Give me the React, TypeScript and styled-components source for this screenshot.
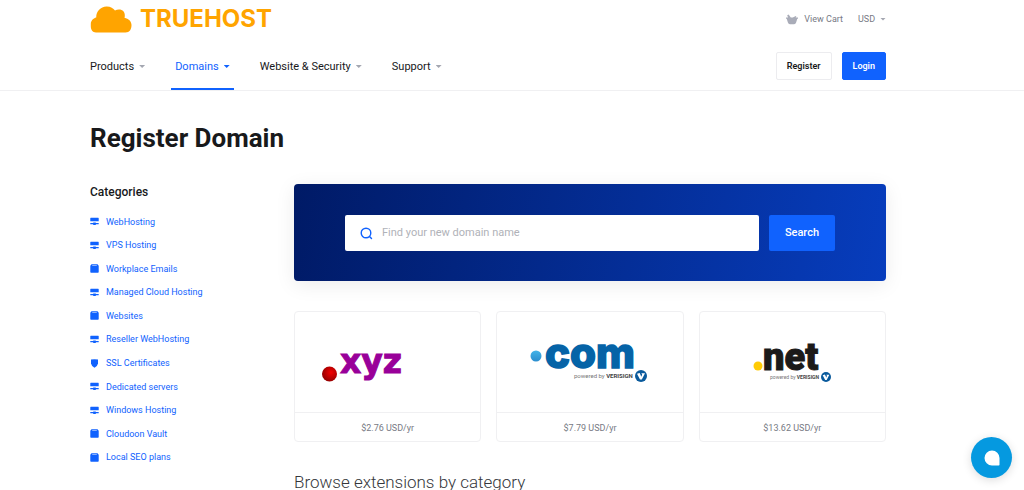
import React from "react";
import styled, { createGlobalStyle } from "styled-components";

const GlobalStyle = createGlobalStyle`
  *, *::before, *::after { box-sizing: border-box; }
  body {
    margin: 0;
    background: #fff;
    color: #18191b;
    font-family: Roboto, "Liberation Sans", sans-serif;
    font-size: 11px;
    line-height: 16px;
  }
  button, input, select { font: inherit; color: inherit; }
  h1, h2, ul, p { margin: 0; padding: 0; }
  ul { list-style: none; }
`;

const Header = styled.header`
  padding: 0 138px 0 90px;
  border-bottom: 1px solid #f0f0f2;
`;

const Bar = styled.div`
  display: flex;
  align-items: center;
  justify-content: space-between;
`;

const TopBar = styled(Bar)`
  height: 38px;
`;

const Brand = styled.a`
  display: flex;
  align-items: center;
  gap: 8px;
  color: #ffa400;
  text-decoration: none;
  font-family: Inter, Roboto, sans-serif;
  font-size: 24px;
  font-weight: 700;
  line-height: 28px;
`;

const Utilities = styled.div`
  display: flex;
  align-items: center;
  gap: 15px;
  color: #777a84;
  font-size: 9px;
`;

const CartLink = styled.a`
  display: flex;
  align-items: center;
  gap: 6px;
  color: inherit;
  text-decoration: none;
`;

const CurrencyField = styled.label`
  display: flex;
  align-items: center;
  gap: 4px;
`;

const CurrencySelect = styled.select`
  appearance: none;
  border: 0;
  padding: 0;
  background: none;
`;

const Caret = styled.span<{ $active?: boolean }>`
  width: 6px;
  height: 3px;
  background: ${(p) => (p.$active ? "#1062fe" : "#a4a7b1")};
  clip-path: polygon(0 0, 100% 0, 50% 100%);
`;

const NavBar = styled(Bar)`
  height: 52px;
`;

const Nav = styled.nav`
  display: flex;
  align-self: stretch;
  gap: 22px;
  margin-left: -4px;
`;

const NavItem = styled.button<{ $active?: boolean }>`
  display: flex;
  align-items: center;
  gap: 5px;
  padding: 7px 4px 0;
  border: 0;
  border-bottom: 2px solid ${(p) => (p.$active ? "#1062fe" : "transparent")};
  background: none;
  color: ${(p) => (p.$active ? "#1062fe" : "#18191b")};
`;

const Actions = styled.div`
  display: flex;
  gap: 10px;
  padding-top: 4px;
`;

const ActionButton = styled.button<{ $primary?: boolean }>`
  height: 28px;
  padding: 0 10px;
  border: 1px solid ${(p) => (p.$primary ? "#1062fe" : "#ececef")};
  border-radius: 2px;
  background: ${(p) => (p.$primary ? "#1062fe" : "#fff")};
  color: ${(p) => (p.$primary ? "#fff" : "#18191b")};
  font-size: 9px;
  font-weight: 600;
`;

const Main = styled.main`
  padding: 31px 138px 24px 90px;
`;

const PageTitle = styled.h1`
  font-size: 26px;
  font-weight: 700;
  line-height: 32px;
`;

const Columns = styled.div`
  display: grid;
  grid-template-columns: 204px minmax(0, 1fr);
  align-items: start;
  margin-top: 30px;
`;

const SidebarTitle = styled.h2`
  font-size: 12px;
  font-weight: 500;
  line-height: 16px;
`;

const CategoryList = styled.ul`
  display: grid;
  grid-auto-rows: 1fr;
  min-height: 259px;
  margin-top: 10px;
`;

const Category = styled.li`
  display: flex;
  align-items: center;
`;

const CategoryLink = styled.a`
  display: flex;
  align-items: center;
  gap: 7px;
  color: #1062fe;
  font-size: 9px;
  text-decoration: none;
`;

const SearchBanner = styled.form`
  display: flex;
  gap: 10px;
  padding: 31px 51px 30px;
  border-radius: 4px;
  background: linear-gradient(100deg, #001a66 0%, #073dbd 100%);
  box-shadow: 0 4px 20px rgba(0, 0, 0, 0.08);
`;

const SearchField = styled.label`
  display: flex;
  flex: 1;
  align-items: center;
  gap: 9px;
  min-width: 0;
  height: 36px;
  padding: 0 15px;
  border-radius: 2px;
  background: #fff;
`;

const SearchInput = styled.input`
  flex: 1;
  min-width: 0;
  padding: 0;
  border: 0;
  outline: 0;
  background: none;
  &::placeholder { color: #b0b2b8; opacity: 1; }
`;

const SearchButton = styled.button`
  padding: 0 16px;
  border: 0;
  border-radius: 2px;
  background: #1062fe;
  color: #fff;
  font-weight: 500;
`;

const Cards = styled.div`
  display: grid;
  grid-template-columns: repeat(3, minmax(0, 1fr));
  gap: 15px;
  margin-top: 30px;
`;

const Card = styled.article`
  border: 1px solid #f0f0f2;
  border-radius: 4px;
`;

const CardLogo = styled.div`
  display: flex;
  justify-content: center;
  height: 100px;
`;

const Price = styled.p`
  padding: 7px 0 5px;
  border-top: 1px solid #f0f0f2;
  color: #777a84;
  font-size: 9px;
  line-height: 16px;
  text-align: center;
`;

const BrowseTitle = styled.h2`
  margin-top: 28px;
  color: #35373b;
  font-size: 17px;
  font-weight: 300;
  line-height: 24px;
`;

const ChatButton = styled.button`
  position: fixed;
  right: 12px;
  bottom: 12px;
  display: flex;
  align-items: center;
  justify-content: center;
  width: 41px;
  height: 41px;
  padding: 0;
  border: 0;
  border-radius: 50%;
  background: #0599e0;
  box-shadow: 0 2px 10px rgba(0, 0, 0, 0.14);
`;

const CloudIcon = () => (
  <svg width="42" height="27" viewBox="0 0 42 27" fill="#ffa400" aria-hidden="true">
    <path d="M6 26.500C2.700 26.500.8 24 .8 20.300V18C.8 14.600 3.300 12.200 6.200 11.400C6.300 5 10.500.8 16.500.5c4-.1 6.800 1.800 8.500 4c1.200-.7 2.500-1 3.900-1c3.800 0 6.300 2.700 5.900 6.700c0 .5-.2 1.100-.3 1.500c4 .8 7 3.400 7 7.300c0 4.500-2 7.500-6 7.500z" />
  </svg>
);

const BasketIcon = () => (
  <svg width="12" height="11" viewBox="0 0 12 11" fill="#a9acb8" aria-hidden="true">
    <path d="M0 3.400h2L1.200 1.300 2.600.4l2.200 3h2L9.800 1.900l.6.8-.9.7H12v1.300h-.7L10.100 8.600q-.5 1.700-2 1.700H3.900q-1.500 0-2-1.700L.7 4.700H0z" />
  </svg>
);

type IconKind = "server" | "box" | "shield";

const iconPaths: Record<IconKind, string> = {
  server: "M.3 1.200q0-.5.500-.5h7.400q.5 0 .5.500V4.300H.3zM.3 6h2.900v-.6h2.600V6h2.900v1.200H5.800v.9H3.200v-.9H.3z",
  box: "M1.500.2h6l1.200 1.500v6.400q0 .7-.7.700H1q-.7 0-.7-.7V1.700zM2.200 1.200v.5h4.600v-.5z",
  shield: "M1 .6L4.500.2 8 .6V4.500Q7.600 6.900 4.500 8.800Q1.400 6.900 1 4.500z",
};

const CategoryIcon = ({ kind }: { kind: IconKind }) => (
  <svg width="9" height="9" viewBox="0 0 9 9" fill="#1062fe" fillRule="evenodd" aria-hidden="true">
    <path d={iconPaths[kind]} />
  </svg>
);

const SearchIcon = () => (
  <svg width="13" height="13" viewBox="0 0 13 13" fill="none" stroke="#1062fe" strokeWidth="1.400" strokeLinecap="round" aria-hidden="true">
    <circle cx="6" cy="6" r="4.800" />
    <path d="M9.500 9.500l2 2" />
  </svg>
);

const VerisignMark = ({ cx, cy, r }: { cx: number; cy: number; r: number }) => (
  <g transform={`translate(${cx} ${cy}) scale(${r / 6})`}>
    <circle r="6" fill="#0a5a9c" />
    <path d="M-4-2.200L-1.300-3 .3.700 1.200-1.500.3-2.800H4L.8 3.600H-1z" fill="#fff" />
  </g>
);

const XyzLogo = () => (
  <svg width="185" height="99" viewBox="0 0 185 99" role="img" aria-label=".xyz">
    <defs>
      <radialGradient id="red-ball" cx=".6" cy=".4" r=".6">
        <stop offset="0" stopColor="#f20000" />
        <stop offset="1" stopColor="#970000" />
      </radialGradient>
    </defs>
    <circle cx="34.500" cy="62" r="7.500" fill="url(#red-ball)" />
    <text x="45" y="61" fill="#990099" stroke="#990099" strokeWidth="1" fontFamily="'DejaVu Sans', sans-serif" fontWeight="700" fontSize="33">xyz</text>
  </svg>
);

const ComLogo = () => (
  <svg width="185" height="99" viewBox="0 0 185 99" role="img" aria-label=".com powered by Verisign">
    <defs>
      <linearGradient id="blue-dot" x2="0" y2="1">
        <stop offset="0" stopColor="#43b4e8" />
        <stop offset="1" stopColor="#2a8dce" />
      </linearGradient>
    </defs>
    <circle cx="39" cy="44" r="5.500" fill="url(#blue-dot)" />
    <text x="48" y="56" fill="#0563a7" stroke="#0563a7" strokeWidth="1.500" fontFamily="Inter, sans-serif" fontWeight="800" fontSize="42">com</text>
    <text x="77" y="66" fill="#777" fontFamily="Roboto, sans-serif" fontSize="6">
      powered by <tspan fill="#444" fontWeight="700">VERISIGN</tspan>
    </text>
    <VerisignMark cx={144} cy={64} r={6} />
  </svg>
);

const NetLogo = () => (
  <svg width="185" height="99" viewBox="0 0 185 99" role="img" aria-label=".net powered by Verisign">
    <circle cx="58" cy="54" r="4.500" fill="#ffcb05" />
    <text x="63" y="58" fill="#1b1a19" stroke="#1b1a19" strokeWidth="1" fontFamily="Roboto, sans-serif" fontWeight="900" fontSize="38">net</text>
    <text x="70" y="67" fill="#777" fontFamily="Roboto, sans-serif" fontSize="5">
      powered by <tspan fill="#444" fontWeight="700">VERISIGN</tspan>
    </text>
    <VerisignMark cx={126} cy={65} r={5} />
  </svg>
);

const navItems = ["Products", "Domains", "Website & Security", "Support"];

const categories: { name: string; icon: IconKind }[] = [
  { name: "WebHosting", icon: "server" },
  { name: "VPS Hosting", icon: "server" },
  { name: "Workplace Emails", icon: "box" },
  { name: "Managed Cloud Hosting", icon: "server" },
  { name: "Websites", icon: "box" },
  { name: "Reseller WebHosting", icon: "server" },
  { name: "SSL Certificates", icon: "shield" },
  { name: "Dedicated servers", icon: "server" },
  { name: "Windows Hosting", icon: "server" },
  { name: "Cloudoon Vault", icon: "box" },
  { name: "Local SEO plans", icon: "box" },
];

const extensions = [
  { id: "xyz", Logo: XyzLogo, price: "$2.76 USD/yr" },
  { id: "com", Logo: ComLogo, price: "$7.79 USD/yr" },
  { id: "net", Logo: NetLogo, price: "$13.62 USD/yr" },
];

export default function App() {
  return (
    <>
      <GlobalStyle />
      <Header>
        <TopBar>
          <Brand href="#">
            <CloudIcon />
            TRUEHOST
          </Brand>
          <Utilities>
            <CartLink href="#cart">
              <BasketIcon />
              View Cart
            </CartLink>
            <CurrencyField>
              <CurrencySelect aria-label="Currency" defaultValue="USD">
                <option>USD</option>
              </CurrencySelect>
              <Caret />
            </CurrencyField>
          </Utilities>
        </TopBar>
        <NavBar>
          <Nav>
            {navItems.map((item) => (
              <NavItem key={item} type="button" $active={item === "Domains"}>
                {item}
                <Caret $active={item === "Domains"} />
              </NavItem>
            ))}
          </Nav>
          <Actions>
            <ActionButton type="button">Register</ActionButton>
            <ActionButton type="button" $primary>Login</ActionButton>
          </Actions>
        </NavBar>
      </Header>
      <Main>
        <PageTitle>Register Domain</PageTitle>
        <Columns>
          <aside>
            <SidebarTitle>Categories</SidebarTitle>
            <CategoryList>
              {categories.map(({ name, icon }) => (
                <Category key={name}>
                  <CategoryLink href="#">
                    <CategoryIcon kind={icon} />
                    {name}
                  </CategoryLink>
                </Category>
              ))}
            </CategoryList>
          </aside>
          <section>
            <SearchBanner onSubmit={(e) => e.preventDefault()}>
              <SearchField>
                <SearchIcon />
                <SearchInput type="text" aria-label="Domain name" placeholder="Find your new domain name" />
              </SearchField>
              <SearchButton type="submit">Search</SearchButton>
            </SearchBanner>
            <Cards>
              {extensions.map(({ id, Logo, price }) => (
                <Card key={id}>
                  <CardLogo>
                    <Logo />
                  </CardLogo>
                  <Price>{price}</Price>
                </Card>
              ))}
            </Cards>
            <BrowseTitle>Browse extensions by category</BrowseTitle>
          </section>
        </Columns>
      </Main>
      <ChatButton type="button" aria-label="Open chat">
        <svg width="16" height="16" viewBox="0 0 16 16" fill="#fff" aria-hidden="true">
          <path d="M8 .5a7.500 7.500 0 0 1 7.500 7.500v6.700q0 .8-.8.800H8A7.500 7.500 0 0 1 8 .5z" />
        </svg>
      </ChatButton>
    </>
  );
}
